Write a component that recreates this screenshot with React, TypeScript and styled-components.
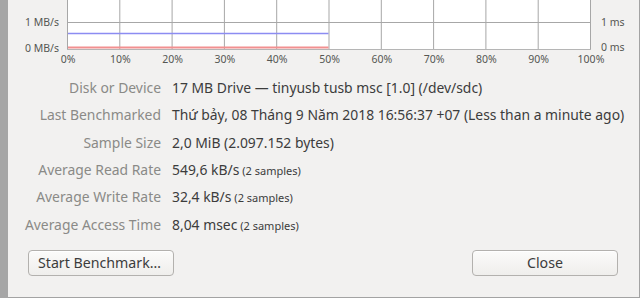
import { Fragment } from 'react'
import styled, { createGlobalStyle } from 'styled-components'

// types
interface InfoRow {
  label: string
  value: string
  note?: string
}

const rows: InfoRow[] = [
  { label: 'Disk or Device', value: '17 MB Drive — tinyusb tusb msc [1.0] (/dev/sdc)' },
  { label: 'Last Benchmarked', value: 'Thứ bảy, 08 Tháng 9 Năm 2018 16:56:37 +07 (Less than a minute ago)' },
  { label: 'Sample Size', value: '2,0 MiB (2.097.152 bytes)' },
  { label: 'Average Read Rate', value: '549,6 kB/s', note: '(2 samples)' },
  { label: 'Average Write Rate', value: '32,4 kB/s', note: '(2 samples)' },
  { label: 'Average Access Time', value: '8,04 msec', note: '(2 samples)' },
]

const GlobalStyle = createGlobalStyle`
  html, body {
    margin: 0;
    padding: 0;
  }
  body {
    font-family: "Noto Sans", "DejaVu Sans", sans-serif;
  }
`

// styled components
const Window = styled.div`
  display: flex;
  width: 640px;
  height: 298px;
  overflow: hidden;
`

const BackStrip = styled.div`
  width: 8px;
  background: #a6a6a6;
`

const Dialog = styled.div`
  flex: 1;
  display: flex;
  flex-direction: column;
  background: #f2f1f0;
  border-right: 1px solid #a3a3a3;
  border-bottom: 1px solid #a3a3a3;
`

const ChartSvg = styled.svg`
  display: block;
  font-family: "Noto Sans", sans-serif;
  font-size: 10.5px;
  fill: #555753;
`

const InfoGrid = styled.div`
  display: grid;
  grid-template-columns: 153px 1fr;
  grid-auto-rows: 27.3px;
  column-gap: 11px;
  align-items: center;
  margin-top: 8px;
  font-size: 13.9px;
`

const Label = styled.div`
  text-align: right;
  color: #8a8a87;
  white-space: nowrap;
`

const Value = styled.div`
  color: #3c3c3c;
  white-space: nowrap;
`

const Note = styled.span`
  font-size: 11px;
`

const ButtonRow = styled.div`
  display: flex;
  justify-content: space-between;
  padding: 12px 21px 0 20px;
`

const Button = styled.button<{ wide?: boolean }>`
  width: 146px;
  height: 26px;
  border: 1px solid #b3b1ae;
  border-radius: 4px;
  background: linear-gradient(#fbfbfa, #efeeec);
  box-shadow: inset 0 1px 0 #ffffff;
  color: #3c3c3c;
  font-family: "Noto Sans", sans-serif;
  font-size: 14.2px;
  text-align: ${(props) => (props.wide ? 'center' : 'left')};
  padding: 0 0 1px ${(props) => (props.wide ? '0' : '9px')};
`

// chart drawing
const X0 = 59
const X100 = 582
const Y1 = 22
const YBASE = 49

const Chart = () => {
  const ticks = Array.from({ length: 11 }, (_, i) => i)
  const mid = X0 + (X100 - X0) / 2
  return (
    <ChartSvg width={631} height={66}>
      <rect x={X0} y={0} width={X100 - X0} height={YBASE} fill="#ffffff" />
      {ticks.map((t) => {
        const x = X0 + ((X100 - X0) * t) / 10 + 0.5
        return <line key={t} x1={x} y1={0} x2={x} y2={YBASE} stroke="#a7a7a7" strokeWidth={1} />
      })}
      <line x1={X0} y1={Y1 + 0.5} x2={X100} y2={Y1 + 0.5} stroke="#a7a7a7" />
      <line x1={X0 + 1} y1={33.5} x2={mid} y2={33.5} stroke="#8c8cf2" strokeWidth={1.5} />
      <line x1={X0 + 1} y1={47.5} x2={mid} y2={47.5} stroke="#f29090" strokeWidth={2} />
      <line x1={X0} y1={YBASE + 0.5} x2={X100 + 1} y2={YBASE + 0.5} stroke="#b5b5b5" />
      <text x={51} y={Y1 + 4} textAnchor="end">1 MB/s</text>
      <text x={51} y={YBASE + 3} textAnchor="end">0 MB/s</text>
      <text x={593} y={Y1 + 4}>1 ms</text>
      <text x={593} y={YBASE + 2}>0 ms</text>
      {ticks.map((t) => (
        <text key={t} x={X0 + ((X100 - X0) * t) / 10 + 1} y={63} textAnchor="middle">
          {t * 10}%
        </text>
      ))}
    </ChartSvg>
  )
}

export default function App() {
  return (
    <>
      <GlobalStyle />
      <Window>
        <BackStrip />
        <Dialog>
          <Chart />
          <InfoGrid>
            {rows.map((r) => (
              <Fragment key={r.label}>
                <Label>{r.label}</Label>
                <Value>
                  {r.value}
                  {r.note && <Note> {r.note}</Note>}
                </Value>
              </Fragment>
            ))}
          </InfoGrid>
          <ButtonRow>
            <Button>Start Benchmark…</Button>
            <Button wide>Close</Button>
          </ButtonRow>
        </Dialog>
      </Window>
    </>
  )
}
